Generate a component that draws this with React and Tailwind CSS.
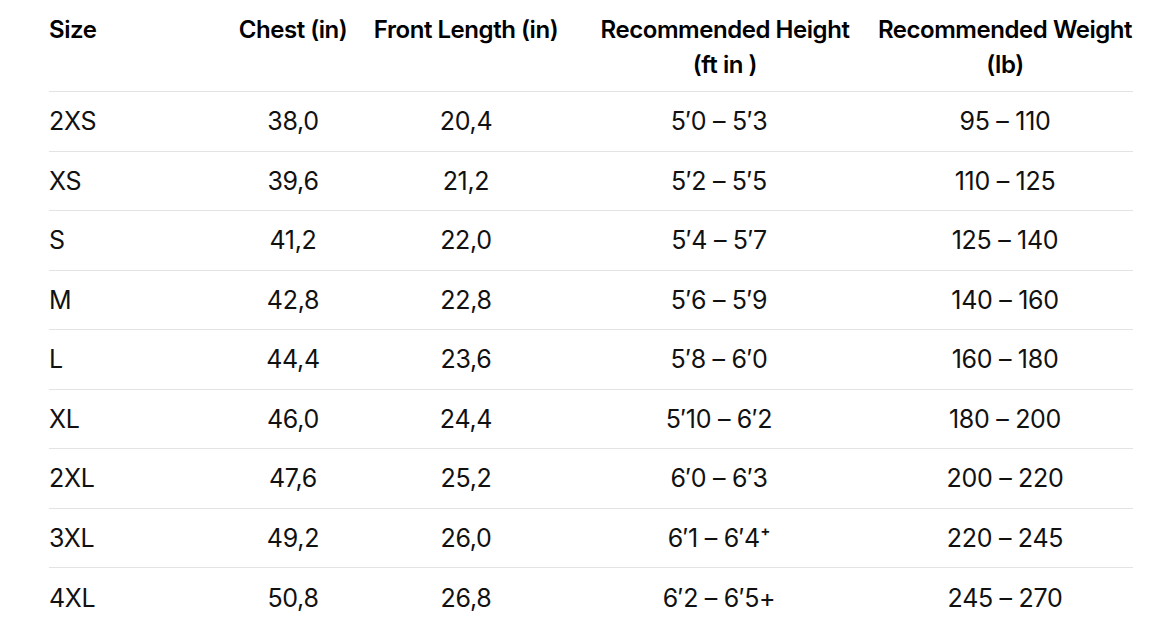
import React from "react";

const ROWS = [
  ["2XS", "38,0", "20,4", "5′0 – 5′3", "95 – 110"],
  ["XS", "39,6", "21,2", "5′2 – 5′5", "110 – 125"],
  ["S", "41,2", "22,0", "5′4 – 5′7", "125 – 140"],
  ["M", "42,8", "22,8", "5′6 – 5′9", "140 – 160"],
  ["L", "44,4", "23,6", "5′8 – 6′0", "160 – 180"],
  ["XL", "46,0", "24,4", "5′10 – 6′2", "180 – 200"],
  ["2XL", "47,6", "25,2", "6′0 – 6′3", "200 – 220"],
  ["3XL", "49,2", "26,0", "6′1 – 6′4⁺", "220 – 245"],
  ["4XL", "50,8", "26,8", "6′2 – 6′5+", "245 – 270"],
];

const GRID = "grid grid-cols-[187px_114px_232px_286px_1fr] w-[1084px]";

export default function App() {
  return (
    <div className="min-h-screen bg-white pl-[49px] text-[#111] font-['Inter',sans-serif]">
      {/* header */}
      <div className={`${GRID} h-[92px] items-start pt-[12px] border-b border-[#e3e3e3] text-[24px] font-semibold leading-[35px] tracking-[-0.45px] text-black`}>
        <div>Size</div>
        <div className="text-center">Chest (in)</div>
        <div className="text-center">Front Length (in)</div>
        <div className="text-center">
          Recommended Height
          <br />
          (ft in )
        </div>
        <div className="text-center pl-[9px]">
          Recommended Weight
          <br />
          (lb)
        </div>
      </div>

      {/* rows */}
      {ROWS.map((r, i) => (
        <div
          key={r[0]}
          className={`${GRID} h-[59.5px] items-center pt-[1px] text-[25px] tracking-[-0.3px] ${
            i < ROWS.length - 1 ? "border-b border-[#e3e3e3]" : ""
          }`}
        >
          <div>{r[0]}</div>
          <div className="text-center">{r[1]}</div>
          <div className="text-center">{r[2]}</div>
          <div className="text-center pr-[12px]">{r[3]}</div>
          <div className="text-center pl-[9px]">{r[4]}</div>
        </div>
      ))}
    </div>
  );
}
